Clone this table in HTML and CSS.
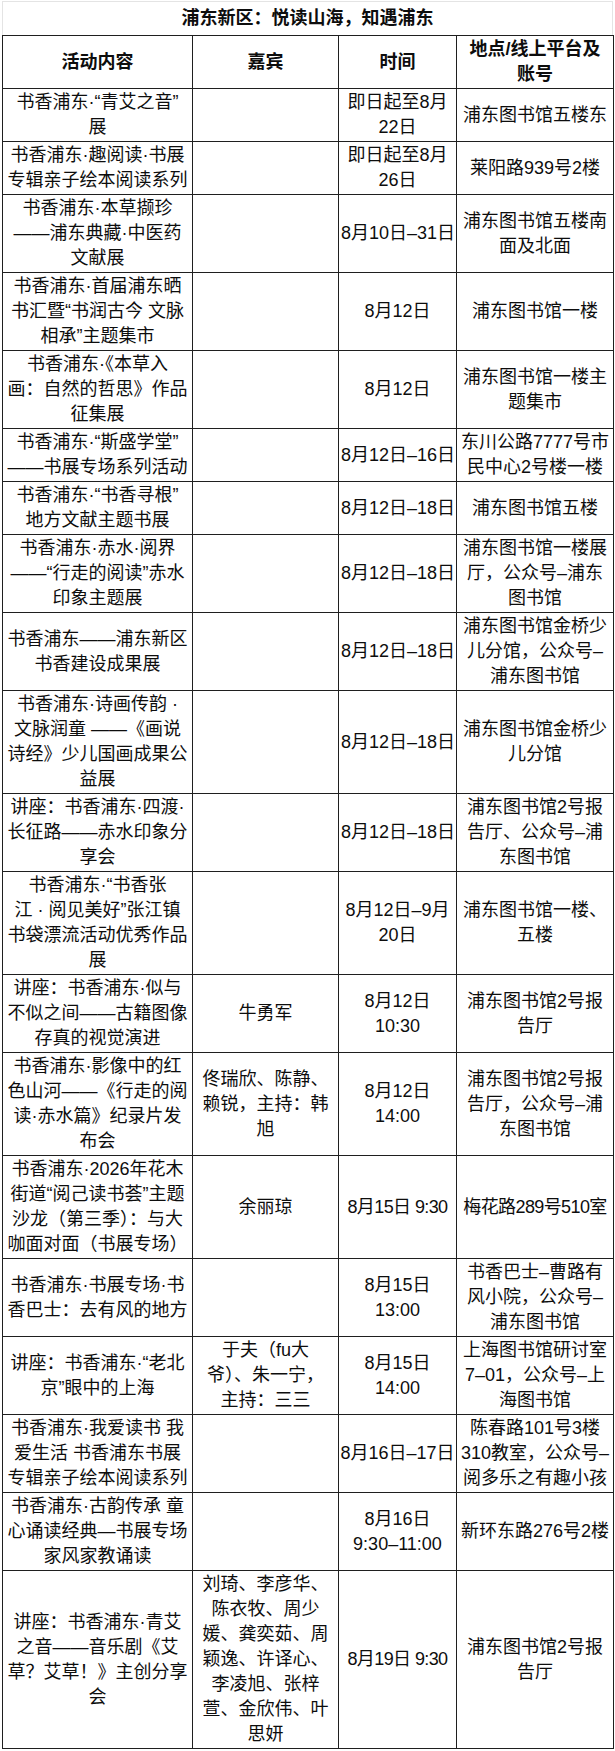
FILE: index.html
```html
<!DOCTYPE html>
<html lang="zh-CN">
<head>
<meta charset="utf-8">
<title>浦东新区：悦读山海，知遇浦东</title>
<link rel="stylesheet" href="styles.css">
</head>
<body>
<div class="sheet">
  <div class="title">浦东新区：悦读山海，知遇浦东</div>
  <table class="schedule">
    <colgroup>
      <col class="c-act"><col class="c-guest"><col class="c-time"><col class="c-place">
    </colgroup>
    <thead>
      <tr><th>活动内容</th><th>嘉宾</th><th>时间</th><th>地点/线上平台及<br>账号</th></tr>
    </thead>
    <tbody>
      <tr><td>书香浦东·“青艾之音”<br>展</td><td></td><td>即日起至8月<br>22日</td><td>浦东图书馆五楼东</td></tr>
      <tr><td>书香浦东·趣阅读·书展<br>专辑亲子绘本阅读系列</td><td></td><td>即日起至8月<br>26日</td><td>莱阳路939号2楼</td></tr>
      <tr><td>书香浦东·本草撷珍<br>——浦东典藏·中医药<br>文献展</td><td></td><td>8月10日–31日</td><td>浦东图书馆五楼南<br>面及北面</td></tr>
      <tr><td>书香浦东·首届浦东晒<br>书汇暨“书润古今 文脉<br>相承”主题集市</td><td></td><td>8月12日</td><td>浦东图书馆一楼</td></tr>
      <tr><td>书香浦东·《本草入<br>画：自然的哲思》作品<br>征集展</td><td></td><td>8月12日</td><td>浦东图书馆一楼主<br>题集市</td></tr>
      <tr><td>书香浦东·“斯盛学堂”<br>——书展专场系列活动</td><td></td><td>8月12日–16日</td><td>东川公路7777号市<br>民中心2号楼一楼</td></tr>
      <tr><td>书香浦东·“书香寻根”<br>地方文献主题书展</td><td></td><td>8月12日–18日</td><td>浦东图书馆五楼</td></tr>
      <tr><td>书香浦东·赤水·阅界<br>——“行走的阅读”赤水<br>印象主题展</td><td></td><td>8月12日–18日</td><td>浦东图书馆一楼展<br>厅，公众号–浦东<br>图书馆</td></tr>
      <tr><td>书香浦东——浦东新区<br>书香建设成果展</td><td></td><td>8月12日–18日</td><td>浦东图书馆金桥少<br>儿分馆，公众号–<br>浦东图书馆</td></tr>
      <tr><td>书香浦东·诗画传韵 ·<br>文脉润童 ——《画说<br>诗经》少儿国画成果公<br>益展</td><td></td><td>8月12日–18日</td><td>浦东图书馆金桥少<br>儿分馆</td></tr>
      <tr><td>讲座：书香浦东·四渡·<br>长征路——赤水印象分<br>享会</td><td></td><td>8月12日–18日</td><td>浦东图书馆2号报<br>告厅、公众号–浦<br>东图书馆</td></tr>
      <tr><td>书香浦东·“书香张<br>江 · 阅见美好”张江镇<br>书袋漂流活动优秀作品<br>展</td><td></td><td>8月12日–9月<br>20日</td><td>浦东图书馆一楼、<br>五楼</td></tr>
      <tr><td>讲座：书香浦东·似与<br>不似之间——古籍图像<br>存真的视觉演进</td><td>牛勇军</td><td>8月12日<br>10:30</td><td>浦东图书馆2号报<br>告厅</td></tr>
      <tr><td>书香浦东·影像中的红<br>色山河——《行走的阅<br>读·赤水篇》纪录片发<br>布会</td><td>佟瑞欣、陈静、<br>赖锐，主持：韩<br>旭</td><td>8月12日<br>14:00</td><td>浦东图书馆2号报<br>告厅，公众号–浦<br>东图书馆</td></tr>
      <tr><td>书香浦东·2026年花木<br>街道“阅己读书荟”主题<br>沙龙（第三季）：与大<br>咖面对面（书展专场）</td><td>余丽琼</td><td class="tight">8月15日 9:30</td><td class="tight">梅花路289号510室</td></tr>
      <tr><td>书香浦东·书展专场·书<br>香巴士：去有风的地方</td><td></td><td>8月15日<br>13:00</td><td>书香巴士–曹路有<br>风小院，公众号–<br>浦东图书馆</td></tr>
      <tr><td>讲座：书香浦东·“老北<br>京”眼中的上海</td><td>于夫（fu大<br>爷）、朱一宁，<br>主持：三三</td><td>8月15日<br>14:00</td><td>上海图书馆研讨室<br>7–01，公众号–上<br>海图书馆</td></tr>
      <tr><td>书香浦东·我爱读书 我<br>爱生活 书香浦东书展<br>专辑亲子绘本阅读系列</td><td></td><td class="snug">8月16日–17日</td><td>陈春路101号3楼<br>310教室，公众号–<br>阅多乐之有趣小孩</td></tr>
      <tr><td>书香浦东·古韵传承 童<br>心诵读经典—书展专场<br>家风家教诵读</td><td></td><td>8月16日<br>9:30–11:00</td><td>新环东路276号2楼</td></tr>
      <tr><td>讲座：书香浦东·青艾<br>之音——音乐剧《艾<br>草？艾草！》主创分享<br>会</td><td>刘琦、李彦华、<br>陈衣牧、周少<br>媛、龚奕茹、周<br>颖逸、许译心、<br>李凌旭、张梓<br>萱、金欣伟、叶<br>思妍</td><td class="tight">8月19日 9:30</td><td>浦东图书馆2号报<br>告厅</td></tr>
    </tbody>
  </table>
</div>
</body>
</html>
```

FILE: styles.css
```css
html, body {
  margin: 0;
  padding: 0;
  background: #ffffff;
}

body {
  font-family: "Liberation Sans", "Noto Sans CJK SC", sans-serif;
  color: #0d0d0d;
  font-size: 18px;
}

.sheet {
  width: 611px;
  margin: 1px 0 0 2px;
}

.title {
  box-sizing: border-box;
  height: 34px;
  border: 1px solid #e4e4e4;
  border-bottom: none;
  text-align: center;
  font-weight: 700;
  font-size: 18px;
  line-height: 33px;
}

.schedule {
  width: 611px;
  border-collapse: collapse;
  table-layout: fixed;
}

.c-act { width: 190px; }
.c-guest { width: 146px; }
.c-time { width: 118px; }
.c-place { width: 157px; }

.schedule th,
.schedule td {
  border: 1px solid #1f1f1f;
  padding: 1px 2px;
  line-height: 25px;
  text-align: center;
  vertical-align: middle;
  white-space: nowrap;
  overflow: visible;
}

.schedule th {
  font-weight: 700;
}

.schedule td.tight {
  letter-spacing: -0.6px;
  padding: 1px 0;
}

.schedule td.snug {
  padding: 1px 0;
}
```
